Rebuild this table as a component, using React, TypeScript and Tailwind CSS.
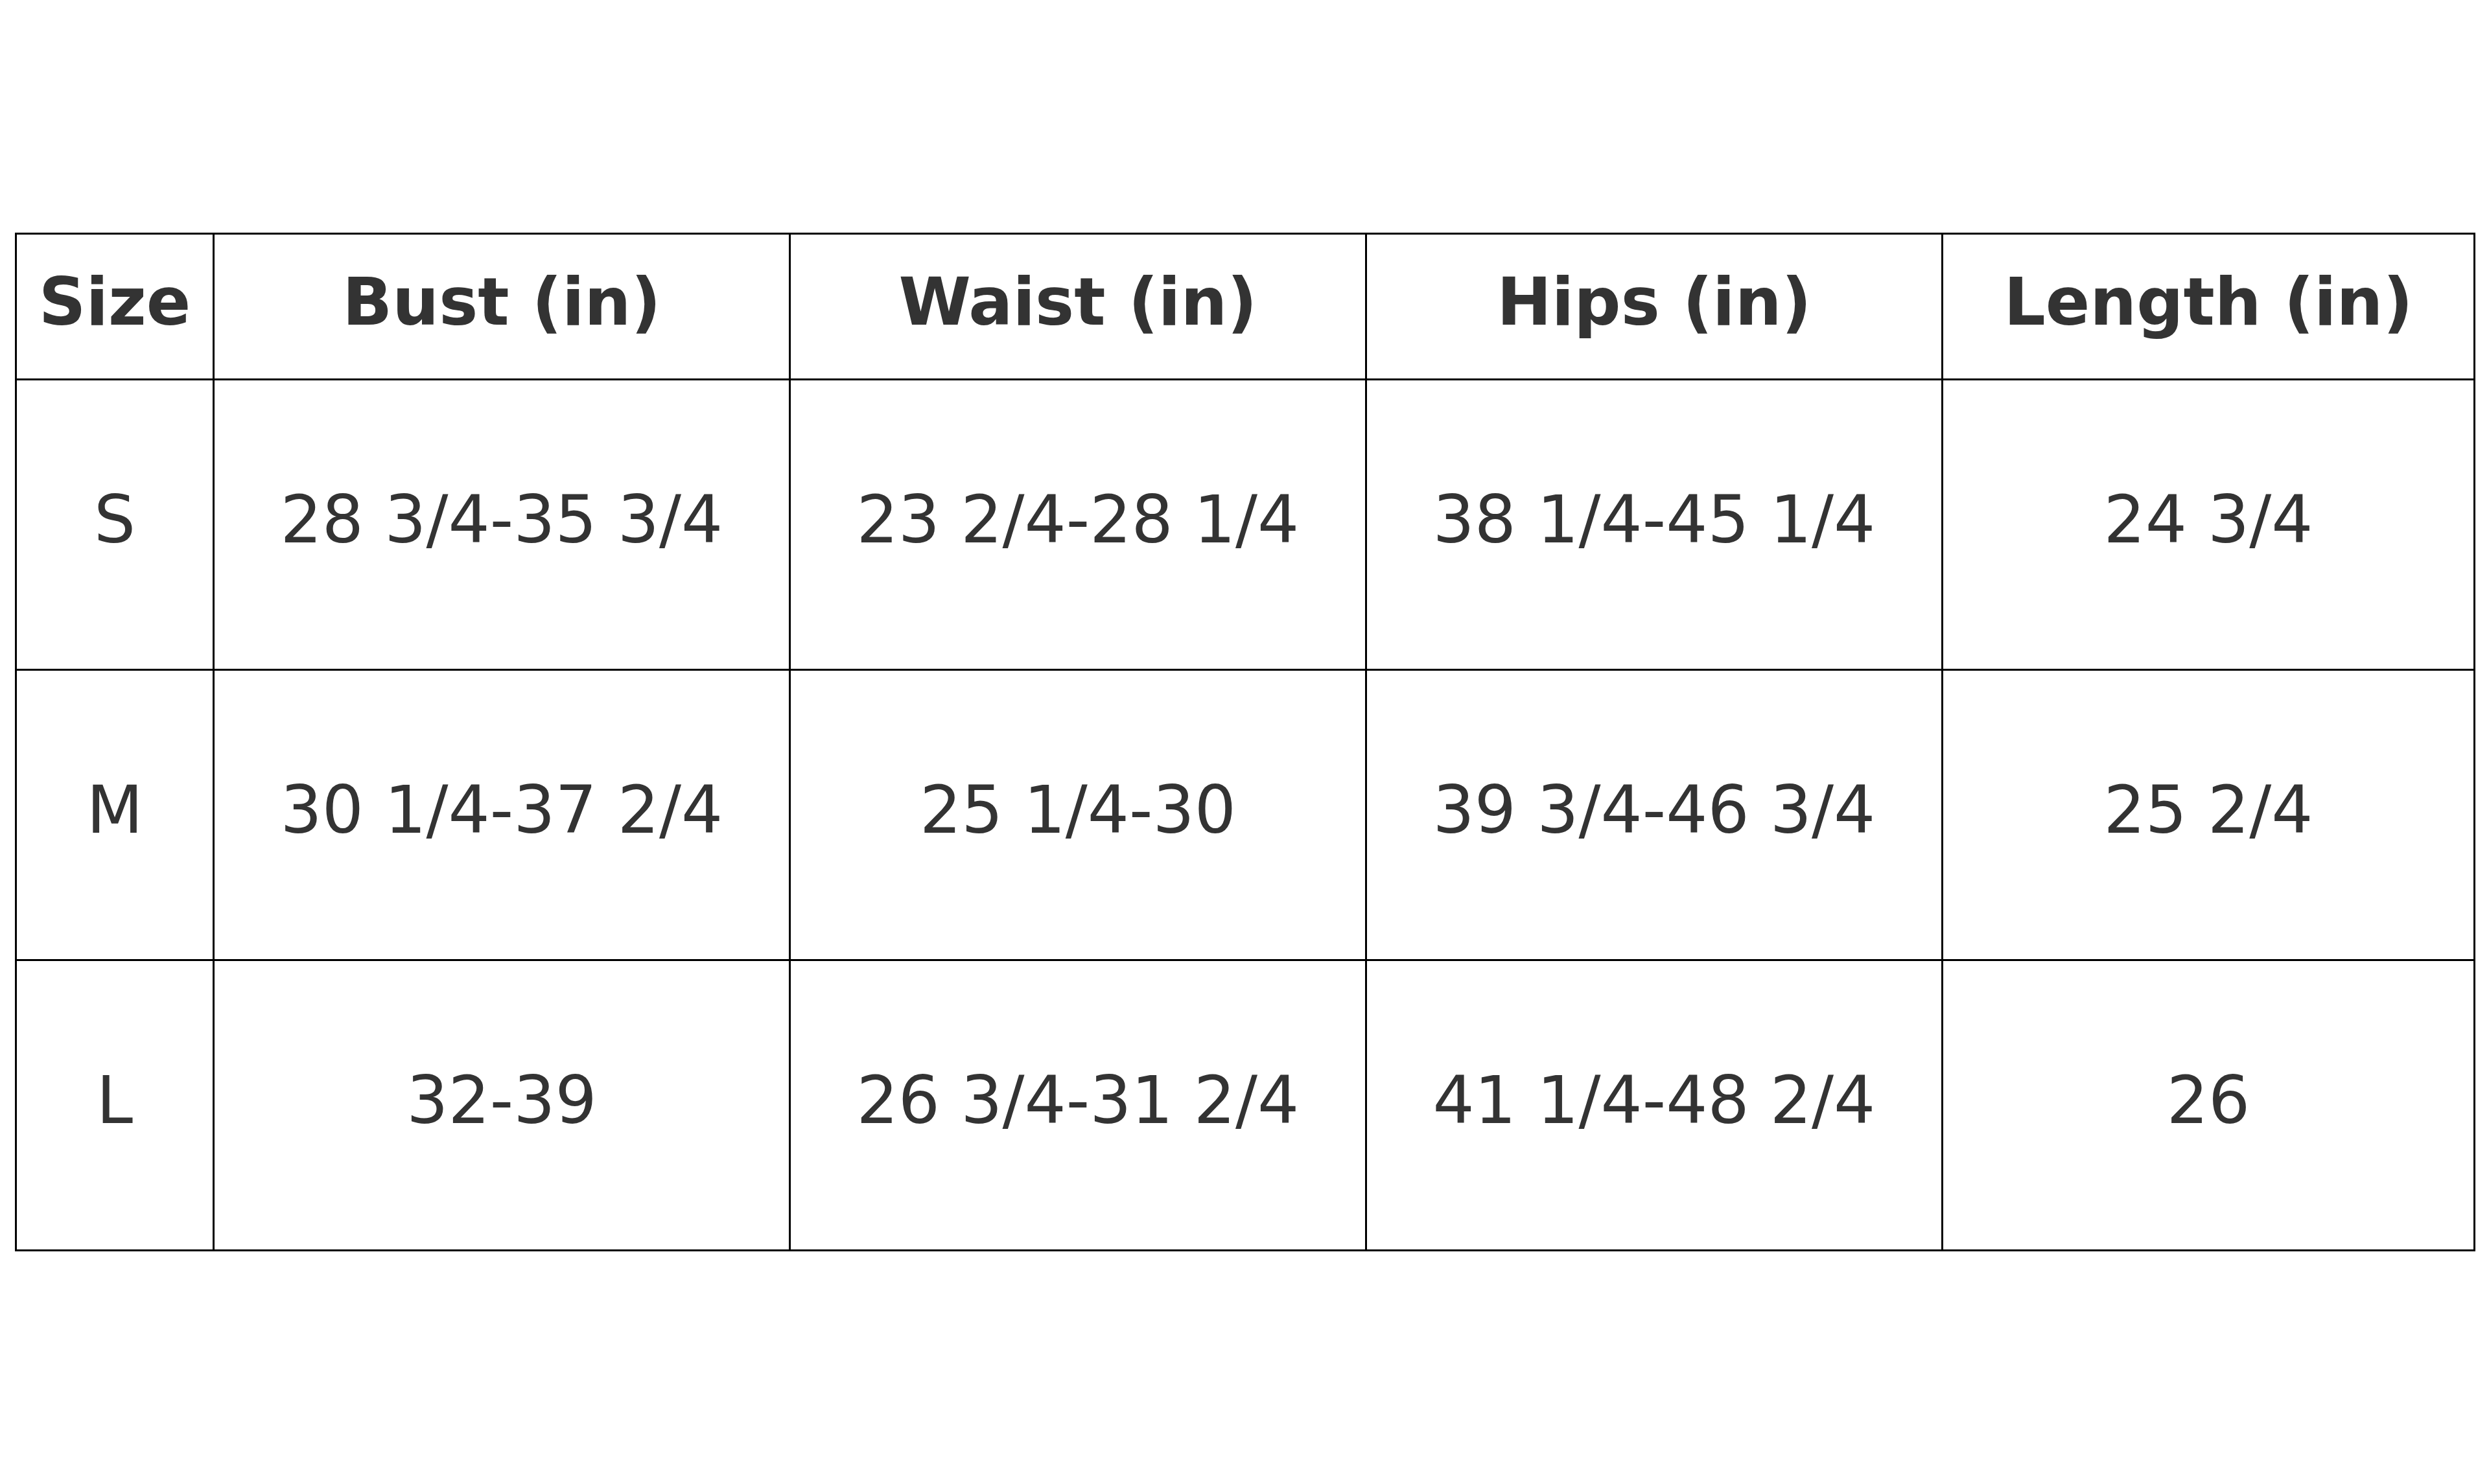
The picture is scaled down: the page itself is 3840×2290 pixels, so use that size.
const headers = ['Size', 'Bust (in)', 'Waist (in)', 'Hips (in)', 'Length (in)']

const rows = [
  ['S', '28 3/4-35 3/4', '23 2/4-28 1/4', '38 1/4-45 1/4', '24 3/4'],
  ['M', '30 1/4-37 2/4', '25 1/4-30', '39 3/4-46 3/4', '25 2/4'],
  ['L', '32-39', '26 3/4-31 2/4', '41 1/4-48 2/4', '26'],
]

export default function App() {
  return (
    <div
      className="w-[3840px] h-[2290px] bg-white pt-[359px] pl-[23px] text-[#333333]"
      style={{ fontFamily: '"DejaVu Sans", Verdana, sans-serif' }}
    >
      <table className="border-collapse table-fixed w-[3793px] text-[101px] leading-none">
        <colgroup>
          <col className="w-[305px]" />
          <col className="w-[889px]" />
          <col className="w-[889px]" />
          <col className="w-[889px]" />
          <col className="w-[821px]" />
        </colgroup>
        <thead>
          <tr className="h-[225px]">
            {headers.map((h) => (
              <th key={h} className="border-[3px] border-black font-bold text-center align-middle p-0 pb-[14px]">
                {h}
              </th>
            ))}
          </tr>
        </thead>
        <tbody>
          {rows.map((row) => (
            <tr key={row[0]} className="h-[448px]">
              {row.map((cell, i) => (
                <td key={i} className="border-[3px] border-black font-normal text-center align-middle p-0 pb-[14px]">
                  {cell}
                </td>
              ))}
            </tr>
          ))}
        </tbody>
      </table>
    </div>
  )
}
